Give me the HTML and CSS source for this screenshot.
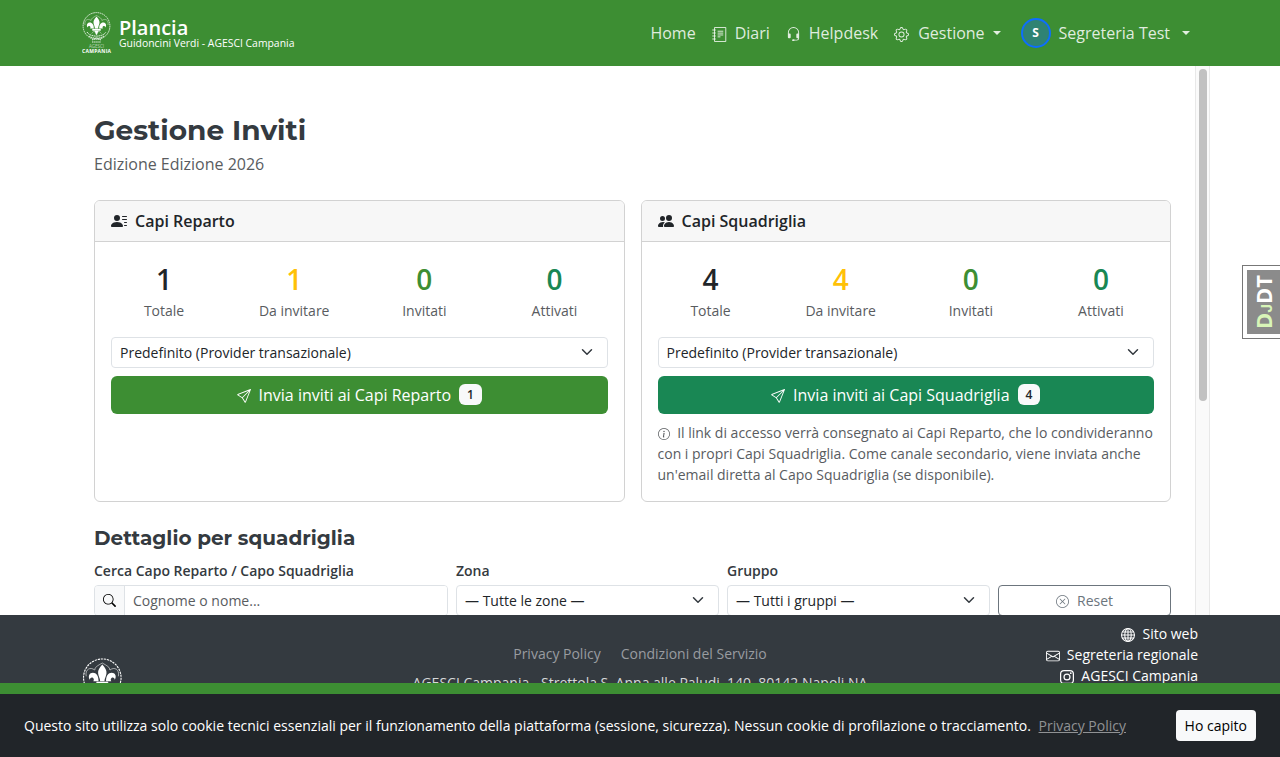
FILE: index.html
```html
<!DOCTYPE html>
<html lang="it">
    <head>
        <meta charset="utf-8">
        <title>Gestione Inviti - Plancia</title>
        <link rel="stylesheet" href="styles.css">
    </head>
    <body>
        <svg class="sprite" aria-hidden="true">
            <symbol id="logo" viewBox="0 0 30 42">
                <circle cx="14.5" cy="14" r="13.4" fill="none" stroke="currentColor" stroke-width="0.8" stroke-dasharray="1.6 0.6"/>
                <path d="M14.5 3.5c-3.5 2-5.5 3-5.3 5M14.5 3.5c3.500 2 5.500 3 5.300 5M3 13c-1-5 3-7 6-4.500M26 13c1-5-3-7-6-4.500" fill="none" stroke="currentColor" stroke-width="0.4"/>
                <path d="M14.500 4.500c2 2.300 3.200 4 3 6.300-.2 2.200-1.300 3.500-1.500 5.700h-3c-.2-2.200-1.300-3.500-1.500-5.700-.2-2.300 1-4 3-6.300z" fill="currentColor"/>
                <path d="M11.800 16.500c.2-3.500-1.600-6-4-6-2.500 0-3.800 2.600-2.200 5 .2-1.500 1.400-2 2.300-1.300.8.600.6 1.600.2 2.300zM17.200 16.500c-.2-3.500 1.600-6 4-6 2.500 0 3.800 2.600 2.200 5-.2-1.500-1.400-2-2.300-1.300-.8.600-.6 1.600-.2 2.300z" fill="currentColor"/>
                <path d="M10.500 17h8v1.500h-8zM12.500 19l2 4 2-4zM12 19.200l-2.500 2.300M17 19.200l2.500 2.300" fill="currentColor" stroke="currentColor" stroke-width="0.4"/>
                <path d="M5 20c3 5.500 16 5.500 19 0M7 24c4 3 11 3 15 0M10 28l4.500-2 4.500 2M10 30h9" fill="none" stroke="currentColor" stroke-width="0.9" stroke-dasharray="1.500 0.600"/>
                <text x="14.500" y="35.500" text-anchor="middle" font-size="4.500" fill="currentColor" opacity="0.6">AGESCI</text>
                <text x="14.500" y="40.700" text-anchor="middle" font-size="5" font-weight="700" textLength="29" fill="currentColor">CAMPANIA</text>
            </symbol>
            <symbol id="send" viewBox="0 0 16 16">
                <path d="M15.854.146a.5.5 0 0 1 .11.54l-5.819 14.547a.75.75 0 0 1-1.329.124l-3.178-4.995L.643 7.184a.75.75 0 0 1 .124-1.33L15.314.037a.5.5 0 0 1 .54.11ZM6.636 10.070l2.761 4.338L14.130 2.576zm6.787-8.201L1.591 6.602l4.339 2.760z"/>
            </symbol>
            <symbol id="chevron" viewBox="0 0 16 16">
                <path d="m2 5 6 6 6-6" fill="none" stroke="#343a40" stroke-width="2" stroke-linecap="round" stroke-linejoin="round"/>
            </symbol>
        </svg>

        <nav class="navbar">
            <div class="container">
                <a class="brand" href="#">
                    <svg class="brand-logo"><use href="#logo"/></svg>
                    <span class="brand-text">
                        <strong>Plancia</strong>
                        <small>Guidoncini Verdi - AGESCI Campania</small>
                    </span>
                </a>
                <div class="nav-links">
                    <a href="#">Home</a>
                    <a href="#">
                        <svg class="icon" viewBox="0 0 16 16"><path d="M2.700.5h12v15h-12z" fill="none" stroke="currentColor"/><path d="M.3 3.200h3.700M.3 6.400h3.700M.3 9.600h3.700M.3 12.800h3.700M6 4.500h6M6 6.500h6M6 8.500h6M6 10.500h3" fill="none" stroke="currentColor"/></svg>
                        Diari
                    </a>
                    <a href="#">
                        <svg class="icon" viewBox="0 0 16 16"><path d="M8 1a5 5 0 0 0-5 5v1h1a1 1 0 0 1 1 1v3a1 1 0 0 1-1 1H3a1 1 0 0 1-1-1V6a6 6 0 1 1 12 0v6a2.500 2.500 0 0 1-2.500 2.500H9.366a1 1 0 0 1-.866.5h-1a1 1 0 1 1 0-2h1a1 1 0 0 1 .866.5H11.500A1.500 1.500 0 0 0 13 12h-1a1 1 0 0 1-1-1V8a1 1 0 0 1 1-1h1V6a5 5 0 0 0-5-5"/></svg>
                        Helpdesk
                    </a>
                    <a href="#" class="manage">
                        <svg class="icon" viewBox="0 0 16 16"><path d="M8 4.754a3.246 3.246 0 1 0 0 6.492 3.246 3.246 0 0 0 0-6.492M5.754 8a2.246 2.246 0 1 1 4.492 0 2.246 2.246 0 0 1-4.492 0"/><path d="M9.796 1.343c-.527-1.790-3.065-1.790-3.592 0l-.094.319a.873.873 0 0 1-1.255.52l-.292-.16c-1.640-.892-3.433.902-2.540 2.541l.159.292a.873.873 0 0 1-.52 1.255l-.319.094c-1.790.527-1.790 3.065 0 3.592l.319.094a.873.873 0 0 1 .52 1.255l-.16.292c-.892 1.640.901 3.434 2.541 2.540l.292-.159a.873.873 0 0 1 1.255.52l.094.319c.527 1.790 3.065 1.790 3.592 0l.094-.319a.873.873 0 0 1 1.255-.52l.292.16c1.640.893 3.434-.902 2.540-2.541l-.159-.292a.873.873 0 0 1 .52-1.255l.319-.094c1.790-.527 1.790-3.065 0-3.592l-.319-.094a.873.873 0 0 1-.52-1.255l.16-.292c.893-1.640-.902-3.433-2.541-2.540l-.292.159a.873.873 0 0 1-1.255-.52zm-2.633.283c.246-.835 1.428-.835 1.674 0l.094.319a1.873 1.873 0 0 0 2.693 1.115l.291-.16c.764-.415 1.600.42 1.184 1.185l-.159.292a1.873 1.873 0 0 0 1.116 2.692l.318.094c.835.246.835 1.428 0 1.674l-.319.094a1.873 1.873 0 0 0-1.115 2.693l.16.291c.415.764-.42 1.600-1.185 1.184l-.291-.159a1.873 1.873 0 0 0-2.693 1.116l-.094.318c-.246.835-1.428.835-1.674 0l-.094-.319a1.873 1.873 0 0 0-2.692-1.115l-.292.16c-.764.415-1.600-.42-1.184-1.185l.159-.291A1.873 1.873 0 0 0 1.945 8.930l-.319-.094c-.835-.246-.835-1.428 0-1.674l.319-.094A1.873 1.873 0 0 0 3.060 4.377l-.16-.292c-.415-.764.42-1.600 1.185-1.184l.292.159a1.873 1.873 0 0 0 2.692-1.115z"/></svg>
                        Gestione
                        <i class="caret"></i>
                    </a>
                    <a class="user" href="#">
                        <span class="avatar">S</span>
                        Segreteria Test
                        <i class="caret"></i>
                    </a>
                </div>
            </div>
        </nav>

        <div class="page">
            <main class="content">
                <h1>Gestione Inviti</h1>
                <p class="subtitle">Edizione Edizione 2026</p>

                <div class="cards">
                    <section class="card">
                        <div class="card-header">
                            <svg class="icon" viewBox="0 0 16 16"><path d="M6 8a3 3 0 1 0 0-6 3 3 0 0 0 0 6m-5 6s-1 0-1-1 1-4 6-4 6 3 6 4-1 1-1 1zM11 3.500a.5.5 0 0 1 .5-.5h4a.5.5 0 0 1 0 1h-4a.5.5 0 0 1-.5-.5m.5 2.500a.5.5 0 0 0 0 1h4a.5.5 0 0 0 0-1zm2 3a.5.5 0 0 0 0 1h2a.5.5 0 0 0 0-1zm0 3a.5.5 0 0 0 0 1h2a.5.5 0 0 0 0-1z"/></svg>
                            Capi Reparto
                        </div>
                        <div class="card-body">
                            <div class="stats">
                                <div><b>1</b><span>Totale</span></div>
                                <div><b class="warning">1</b><span>Da invitare</span></div>
                                <div><b class="primary">0</b><span>Invitati</span></div>
                                <div><b class="success">0</b><span>Attivati</span></div>
                            </div>
                            <div class="select">Predefinito (Provider transazionale)<svg><use href="#chevron"/></svg></div>
                            <button class="btn btn-primary">
                                <svg class="icon"><use href="#send"/></svg>
                                Invia inviti ai Capi Reparto
                                <span class="badge">1</span>
                            </button>
                        </div>
                    </section>

                    <section class="card">
                        <div class="card-header">
                            <svg class="icon" viewBox="0 0 16 16"><path d="M7 14s-1 0-1-1 1-4 5-4 5 3 5 4-1 1-1 1zm4-6a3 3 0 1 0 0-6 3 3 0 0 0 0 6m-5.784 6A2.240 2.240 0 0 1 5 13c0-1.355.68-2.750 1.936-3.720A6.300 6.300 0 0 0 5 9c-4 0-5 3-5 4s1 1 1 1zM4.500 8a2.500 2.500 0 1 0 0-5 2.500 2.500 0 0 0 0 5"/></svg>
                            Capi Squadriglia
                        </div>
                        <div class="card-body">
                            <div class="stats">
                                <div><b>4</b><span>Totale</span></div>
                                <div><b class="warning">4</b><span>Da invitare</span></div>
                                <div><b class="primary">0</b><span>Invitati</span></div>
                                <div><b class="success">0</b><span>Attivati</span></div>
                            </div>
                            <div class="select">Predefinito (Provider transazionale)<svg><use href="#chevron"/></svg></div>
                            <button class="btn btn-success">
                                <svg class="icon"><use href="#send"/></svg>
                                Invia inviti ai Capi Squadriglia
                                <span class="badge">4</span>
                            </button>
                            <p class="note">
                                <svg class="icon" viewBox="0 0 16 16"><path d="M8 15A7 7 0 1 1 8 1a7 7 0 0 1 0 14m0 1A8 8 0 1 0 8 0a8 8 0 0 0 0 16"/><path d="m8.930 6.588-2.290.287-.082.38.45.083c.294.07.352.176.288.469l-.738 3.468c-.194.897.105 1.319.808 1.319.545 0 1.178-.252 1.465-.598l.088-.416c-.2.176-.492.246-.686.246-.275 0-.375-.193-.304-.533zM9 4.500a1 1 0 1 1-2 0 1 1 0 0 1 2 0"/></svg>
                                Il link di accesso verrà consegnato ai Capi Reparto, che lo condivideranno con i propri Capi Squadriglia. Come canale secondario, viene inviata anche un'email diretta al Capo Squadriglia (se disponibile).
                            </p>
                        </div>
                    </section>
                </div>

                <h2>Dettaglio per squadriglia</h2>
                <div class="filters">
                    <div>
                        <label>Cerca Capo Reparto / Capo Squadriglia</label>
                        <div class="search">
                            <span class="search-icon">
                                <svg viewBox="0 0 16 16"><path d="M11.742 10.344a6.500 6.500 0 1 0-1.397 1.398l3.850 3.850a1 1 0 0 0 1.415-1.414l-3.850-3.850zM12 6.500a5.500 5.500 0 1 1-11 0 5.500 5.500 0 0 1 11 0"/></svg>
                            </span>
                            <input type="text" placeholder="Cognome o nome...">
                        </div>
                    </div>
                    <div>
                        <label>Zona</label>
                        <div class="select">— Tutte le zone —<svg><use href="#chevron"/></svg></div>
                    </div>
                    <div>
                        <label>Gruppo</label>
                        <div class="select">— Tutti i gruppi —<svg><use href="#chevron"/></svg></div>
                    </div>
                    <button class="btn btn-reset">
                        <svg class="icon" viewBox="0 0 16 16"><path d="M8 15A7 7 0 1 1 8 1a7 7 0 0 1 0 14m0 1A8 8 0 1 0 8 0a8 8 0 0 0 0 16"/><path d="M4.646 4.646a.5.5 0 0 1 .708 0L8 7.293l2.646-2.647a.5.5 0 0 1 .708.708L8.707 8l2.647 2.646a.5.5 0 0 1-.708.708L8 8.707l-2.646 2.647a.5.5 0 0 1-.708-.708L7.293 8 4.646 5.354a.5.5 0 0 1 0-.708"/></svg>
                        Reset
                    </button>
                </div>
            </main>
            <div class="scrollbar"><div class="thumb"></div></div>
        </div>

        <footer class="footer">
            <div class="container">
                <svg class="footer-logo"><use href="#logo"/></svg>
                <div class="footer-center">
                    <p><a href="#">Privacy Policy</a><a href="#">Condizioni del Servizio</a></p>
                    <p class="address">AGESCI Campania - Strettola S. Anna alle Paludi, 140, 80142 Napoli NA</p>
                </div>
                <div class="footer-links">
                    <a href="#">
                        <svg class="icon" viewBox="0 0 16 16"><g fill="none" stroke="currentColor" stroke-width="1.200"><circle cx="8" cy="8" r="7.400"/><ellipse cx="8" cy="8" rx="3.700" ry="7.400"/><path d="M8 .5v15M.5 8h15M1.700 4.500h12.600M1.700 11.500h12.600"/></g></svg>
                        Sito web
                    </a>
                    <a href="#">
                        <svg class="icon" viewBox="0 0 16 16"><path d="M0 4a2 2 0 0 1 2-2h12a2 2 0 0 1 2 2v8a2 2 0 0 1-2 2H2a2 2 0 0 1-2-2zm2-1a1 1 0 0 0-1 1v.217l7 4.200 7-4.200V4a1 1 0 0 0-1-1zm13 2.383-4.708 2.825L15 11.105zm-.034 6.876-5.640-3.471L8 9.583l-1.326-.795-5.640 3.470A1 1 0 0 0 2 13h12a1 1 0 0 0 .966-.741M1 11.105l4.708-2.897L1 5.383z"/></svg>
                        Segreteria regionale
                    </a>
                    <a href="#">
                        <svg class="icon" viewBox="0 0 16 16"><g fill="none" stroke="currentColor" stroke-width="1.400"><rect x=".7" y=".7" width="14.600" height="14.600" rx="4"/><circle cx="8" cy="8" r="3.400"/></g><circle cx="12.300" cy="3.700" r="1"/></svg>
                        AGESCI Campania
                    </a>
                </div>
            </div>
        </footer>

        <div class="cookie-bar">
            <p>Questo sito utilizza solo cookie tecnici essenziali per il funzionamento della piattaforma (sessione, sicurezza). Nessun cookie di profilazione o tracciamento. <a href="#">Privacy Policy</a></p>
            <button>Ho capito</button>
        </div>

        <div class="debug-handle"><span><em>D<small>J</small></em>DT</span></div>
    </body>
</html>
```

FILE: styles.css
```css
* {
    box-sizing: border-box;
}
body {
    margin: 0;
    height: 757px;
    display: flex;
    flex-direction: column;
    overflow: hidden;
    background: #fff;
    color: #212529;
    font-family: "Open Sans", sans-serif;
    font-size: 16px;
    line-height: 1.5;
}
a {
    color: inherit;
    text-decoration: none;
}
p {
    margin: 0;
}
button,
input {
    font-family: inherit;
}
.sprite {
    position: absolute;
    width: 0;
    height: 0;
}
.icon {
    width: 1em;
    height: 1em;
    fill: currentColor;
    flex: none;
}
.container {
    width: 1140px;
    margin: 0 auto;
    padding: 0 12px;
    display: flex;
    justify-content: space-between;
}

/* navbar */
.navbar {
    flex: 0 0 66px;
    background: #3d8e33;
    color: #fff;
}
.navbar .container {
    height: 66px;
    align-items: center;
}
.brand {
    display: flex;
    align-items: center;
    gap: 7px;
}
.brand-logo {
    width: 30px;
    height: 42px;
}
.brand-text {
    display: flex;
    flex-direction: column;
}
.brand-text strong {
    font-size: 20px;
    font-weight: 600;
    line-height: 21px;
}
.brand-text small {
    font-size: 10.400px;
    line-height: 11px;
}
.nav-links {
    display: flex;
    align-items: center;
    color: rgba(255, 255, 255, 0.85);
}
.nav-links a {
    display: flex;
    align-items: center;
    padding: 0 8px;
}
.nav-links .icon {
    width: 15px;
    height: 15px;
    margin: 3px 8px 0 0;
}
.nav-links .manage .icon {
    margin-right: 9px;
}
.caret {
    margin-left: 8px;
    border: 4.800px solid transparent;
    border-top-color: currentColor;
    border-bottom: 0;
}
.nav-links .user {
    margin-left: 4px;
}
.user .caret {
    margin-left: 12px;
}
.avatar {
    width: 30px;
    height: 30px;
    margin-right: 8px;
    border: 2px solid #0d6efd;
    border-radius: 50%;
    background: #2f8373;
    color: #fff;
    font-size: 12px;
    font-weight: 700;
    line-height: 25px;
    text-align: center;
}

/* main area */
.page {
    flex: 0 0 549px;
    width: 1140px;
    margin: 0 auto;
    display: flex;
    overflow: hidden;
}
.content {
    flex: 1;
    padding: 48px 24px 0;
}
.scrollbar {
    width: 15px;
    padding: 3px 2px;
    background: #fafafa;
    border: 1px solid #e8e8e8;
    border-width: 0 1px;
}
.thumb {
    width: 8px;
    height: 332px;
    margin: 0 auto;
    border-radius: 4px;
    background: #c1c1c1;
}
h1,
h2 {
    margin: 0;
    color: #343a40;
    font-family: Montserrat, Inter, sans-serif;
    font-weight: 700;
    line-height: 1.2;
}
h1 {
    font-size: 28px;
    margin-bottom: 4px;
}
h2 {
    font-size: 20px;
    margin-bottom: 10px;
}
.subtitle {
    margin-bottom: 24px;
    color: #595c5f;
}
.cards {
    display: grid;
    grid-template-columns: 1fr 1fr;
    gap: 16px;
    margin-bottom: 24px;
}
.card {
    border: 1px solid #d2d2d2;
    border-radius: 6px;
    overflow: hidden;
}
.card-header {
    display: flex;
    align-items: center;
    gap: 8px;
    padding: 8px 16px;
    background: #f7f7f7;
    border-bottom: 1px solid #d2d2d2;
    font-weight: 600;
}
.card-body {
    padding: 16px;
}
.stats {
    display: grid;
    grid-template-columns: repeat(4, 1fr);
    column-gap: 24px;
    margin: 0 0 16px;
    text-align: center;
}
.stats b {
    display: block;
    font-size: 28px;
    font-weight: 600;
}
.stats span {
    display: block;
    color: #595c5f;
    font-size: 14px;
    white-space: nowrap;
}
.stats .warning {
    color: #ffc107;
}
.stats .primary {
    color: #3d8e33;
}
.stats .success {
    color: #198754;
}
.select {
    display: flex;
    align-items: center;
    justify-content: space-between;
    height: 31px;
    padding: 0 12px 0 8px;
    border: 1px solid #dee2e6;
    border-radius: 4px;
    font-size: 14px;
}
.select svg {
    width: 16px;
    height: 12px;
}
.btn {
    display: flex;
    align-items: center;
    justify-content: center;
    width: 100%;
    height: 38px;
    border: 0;
    border-radius: 6px;
    color: #fff;
    font-size: 16px;
}
.card .btn {
    margin-top: 8px;
}
.btn .icon {
    width: 14px;
    height: 14px;
    margin: 2px 8px 0 0;
}
.btn-primary {
    background: #3d8e33;
}
.btn-success {
    background: #198754;
}
.badge {
    margin-left: 8px;
    padding: 0 8px;
    border-radius: 6px;
    background: #f8f9fa;
    color: #212529;
    font-size: 12px;
    font-weight: 600;
    line-height: 21px;
}
.note {
    margin-top: 8px;
    color: #595c5f;
    font-size: 14px;
}
.note .icon {
    width: 12px;
    height: 12px;
    margin-right: 4px;
    vertical-align: -2px;
}

/* filters */
.filters {
    display: grid;
    grid-template-columns: 354px 263px 263px 1fr;
    gap: 8px;
    align-items: end;
}
label {
    display: block;
    margin-bottom: 4px;
    color: #343a40;
    font-size: 14px;
    font-weight: 600;
}
.search {
    display: flex;
    height: 31px;
    border: 1px solid #dee2e6;
    border-radius: 4px;
    overflow: hidden;
}
.search-icon {
    display: flex;
    align-items: center;
    padding: 0 8px;
    background: #f8f9fa;
    border-right: 1px solid #dee2e6;
}
.search-icon svg {
    width: 13px;
    height: 13px;
}
.search input {
    flex: 1;
    padding: 0 8px;
    border: 0;
    outline: 0;
    font-size: 14px;
}
.search input::placeholder {
    color: #595c5f;
}
.btn-reset {
    height: 31px;
    border: 1px solid #6c757d;
    border-radius: 4px;
    background: #fff;
    color: #6c757d;
    font-size: 14px;
}
.btn-reset .icon {
    width: 13px;
    height: 13px;
}

/* footer */
.footer {
    flex: 0 0 68px;
    overflow: hidden;
    background: #343a40;
    color: #fff;
    font-size: 14px;
}
.footer .container {
    display: grid;
    grid-template-columns: 1fr auto 1fr;
}
.footer-logo {
    width: 42px;
    height: 59px;
    margin-top: 43px;
}
.footer-center {
    padding-top: 28px;
    text-align: center;
}
.footer-center a {
    margin: 0 10px;
    color: #999ca0;
}
.address {
    margin-top: 8px;
    color: #d6d8d9;
}
.footer-links {
    display: flex;
    flex-direction: column;
    align-items: flex-end;
    padding-top: 8px;
}
.footer-links a {
    display: flex;
    align-items: center;
}
.footer-links .icon {
    margin: 2px 7px 0 0;
}

.cookie-bar {
    flex: 0 0 74px;
    display: flex;
    align-items: center;
    justify-content: space-between;
    padding: 0 24px;
    border-top: 11px solid #3d8e33;
    background: #212529;
    color: #fff;
    font-size: 14px;
}
.cookie-bar a {
    margin-left: 4px;
    color: #909294;
    text-decoration: underline;
}
.cookie-bar button {
    height: 31px;
    padding: 0 9px;
    border: 0;
    border-radius: 4px;
    background: #f8f9fa;
    color: #000;
    font-size: 14px;
}

/* debug toolbar handle */
.debug-handle {
    position: fixed;
    top: 265px;
    right: 0;
    width: 38px;
    height: 74px;
    padding: 4px 0 4px 4px;
    border: 1px solid #777;
    border-right: 0;
    background: #fff;
}
.debug-handle span {
    display: block;
    width: 33px;
    height: 64px;
    background: #8b8b8b;
    color: #fff;
    font-family: "Open Sans", sans-serif;
    font-size: 22px;
    font-weight: 700;
    line-height: 33px;
    text-align: center;
    writing-mode: vertical-rl;
    text-orientation: sideways;
    transform: rotate(180deg);
}
.debug-handle em {
    color: #d8f5b8;
    font-style: normal;
}
.debug-handle small {
    font-family: Inter, sans-serif;
    font-size: 15px;
    line-height: 1;
}
```
